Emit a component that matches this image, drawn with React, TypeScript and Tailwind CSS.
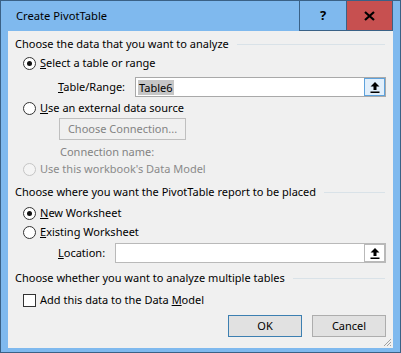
import React from "react";

const font = { fontFamily: '"Noto Sans", "Open Sans", sans-serif' };

function Radio({ checked, disabled }: { checked?: boolean; disabled?: boolean }) {
  return (
    <span
      className={`flex h-[13px] w-[13px] items-center justify-center rounded-full border ${
        disabled ? "border-[#c5c5c5] bg-[#f4f4f4]" : "border-[#333333] bg-white"
      }`}
    >
      {checked && <span className="h-[5px] w-[5px] rounded-full bg-[#111111]" />}
    </span>
  );
}

function PickButton({ active }: { active?: boolean }) {
  return (
    <span
      className={`flex h-[18px] w-[21px] items-center justify-center border ${
        active ? "border-[#5ea2dc] bg-[#e2effb]" : "border-[#b9b9b9] bg-white"
      }`}
    >
      <svg width="10" height="11" viewBox="0 0 10 11">
        <path d="M5 0 L9.5 4.5 L6.5 4.5 L6.5 8 L3.5 8 L3.5 4.5 L0.5 4.5 Z" fill="#000" />
        <rect x="0.5" y="9.5" width="9" height="1.5" fill="#000" />
      </svg>
    </span>
  );
}

function Heading({ text }: { text: string }) {
  return (
    <div className="flex h-[18px] items-center pl-[7px] pr-[8px]">
      <span className="whitespace-nowrap">{text}</span>
      <span className="ml-[8px] h-px flex-1 bg-[#d9e2e8]" />
    </div>
  );
}

export default function App() {
  return (
    <div
      className="flex h-[353px] w-[401px] flex-col border border-[#3a6186] bg-[#7fb9ee] text-[11px] text-[#000000]"
      style={font}
    >
      {/* Title bar */}
      <div className="flex h-[30px] items-stretch">
        <div className="flex flex-1 items-center pl-[15px] text-[11.2px]">Create PivotTable</div>
        <div className="flex w-[48px] items-center justify-center border-x border-b border-[#3a6186] bg-[#7fb9ee] text-[13px] font-bold">
          ?
        </div>
        <div className="mr-[7px] flex w-[46px] items-center justify-center border-b border-r border-[#3a6186] bg-[#c75050]">
          <svg width="11" height="10" viewBox="0 0 11 10">
            <path d="M1 1 L10 9 M10 1 L1 9" stroke="#000" strokeWidth="2.2" />
          </svg>
        </div>
      </div>

      {/* Client */}
      <div className="relative mx-[7px] mb-[4px] flex flex-1 flex-col bg-[#f0f0f0]">
        <div className="mt-[4px]">
          <Heading text="Choose the data that you want to analyze" />
        </div>

        <div className="mt-[1px] flex h-[18px] items-center gap-[4px] pl-[15px]">
          <Radio checked />
          <span>
            <span className="underline">S</span>elect a table or range
          </span>
        </div>

        <div className="mt-[5px] flex h-[20px] items-center pl-[50px] pr-[7px]">
          <span className="w-[77px]">
            <span className="underline">T</span>able/Range:
          </span>
          <div className="flex h-[20px] flex-1 items-center border border-[#a9a9a9] bg-white pl-[2px]">
            <span className="bg-[#c6c6c6] px-[1px] leading-[15px]">Table6</span>
            <span className="flex-1" />
            <PickButton active />
          </div>
        </div>

        <div className="mt-[2px] flex h-[18px] items-center gap-[4px] pl-[15px]">
          <Radio />
          <span>
            <span className="underline">U</span>se an external data source
          </span>
        </div>

        <div className="mt-[1px] pl-[51px]">
          <div className="flex h-[22px] w-[127px] items-center justify-center border border-[#bfbfbf] bg-[#f0f0f0] text-[#838383]">
            Choose Connection...
          </div>
        </div>

        <div className="mt-[4px] flex h-[16px] items-center pl-[52px] text-[#838383]">Connection name:</div>

        <div className="flex h-[18px] items-center gap-[4px] pl-[15px] text-[#8a8a8a]">
          <Radio disabled />
          <span>Use this workbook's Data Model</span>
        </div>

        <div className="mt-[5px]">
          <Heading text="Choose where you want the PivotTable report to be placed" />
        </div>

        <div className="mt-[3px] flex h-[18px] items-center gap-[4px] pl-[15px]">
          <Radio checked />
          <span>
            <span className="underline">N</span>ew Worksheet
          </span>
        </div>

        <div className="mt-[1px] flex h-[18px] items-center gap-[4px] pl-[15px]">
          <Radio />
          <span>
            <span className="underline">E</span>xisting Worksheet
          </span>
        </div>

        <div className="mt-[2px] flex h-[20px] items-center pl-[50px] pr-[7px]">
          <span className="w-[57px]">
            <span className="underline">L</span>ocation:
          </span>
          <div className="flex h-[20px] flex-1 items-center justify-end border border-[#b9b9b9] bg-white">
            <PickButton />
          </div>
        </div>

        <div className="mt-[6px]">
          <Heading text="Choose whether you want to analyze multiple tables" />
        </div>

        <div className="mt-[4px] flex h-[18px] items-center gap-[4px] pl-[15px]">
          <span className="h-[13px] w-[13px] border border-[#333333] bg-white" />
          <span>
            Add this data to the Data <span className="underline">M</span>odel
          </span>
        </div>

        <div className="mt-[6px] flex justify-end gap-[10px] pr-[7px]">
          <div className="flex h-[22px] w-[74px] items-center justify-center border border-[#3c7fb1] bg-[#e1e1e1]">
            OK
          </div>
          <div className="flex h-[22px] w-[74px] items-center justify-center border border-[#adadad] bg-[#e1e1e1]">
            Cancel
          </div>
        </div>

        {/* size grip */}
        <svg className="absolute bottom-[1px] right-[1px]" width="10" height="10" viewBox="0 0 10 10">
          <path d="M9 2 L2 9 M9 5 L5 9 M9 8 L8 9" stroke="#a0a0a0" strokeWidth="1" />
        </svg>
      </div>
    </div>
  );
}
